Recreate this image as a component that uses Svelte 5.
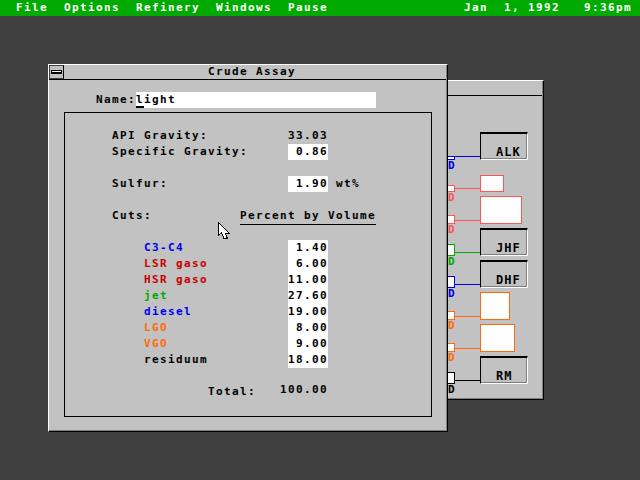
<script>
  const menus = ['File', 'Options', 'Refinery', 'Windows', 'Pause'];
  const cuts = [
    { name: 'C3-C4', value: '1.40', color: 'blue' },
    { name: 'LSR gaso', value: '6.00', color: 'red' },
    { name: 'HSR gaso', value: '11.00', color: 'red' },
    { name: 'jet', value: '27.60', color: 'green' },
    { name: 'diesel', value: '19.00', color: 'blue' },
    { name: 'LGO', value: '8.00', color: 'orange' },
    { name: 'VGO', value: '9.00', color: 'orange' },
    { name: 'residuum', value: '18.00', color: 'black' }
  ];
  const C = { blue: '#0000f0', pink: '#ff5555', green: '#00aa00', orange: '#ff6a10', black: '#000' };
  const units = [
    { kind: 'btn', label: 'ALK', top: 132, h: 28, w: 48, color: C.blue, sTop: 156, sH: 4, line: 156 },
    { kind: 'box', top: 175, h: 17, w: 24, color: C.pink, sTop: 185, sH: 7, line: 188 },
    { kind: 'box', top: 196, h: 28, w: 42, color: C.pink, sTop: 215, sH: 9, line: 220 },
    { kind: 'btn', label: 'JHF', top: 228, h: 28, w: 48, color: C.green, sTop: 244, sH: 12, line: 252 },
    { kind: 'btn', label: 'DHF', top: 260, h: 28, w: 48, color: C.blue, sTop: 276, sH: 12, line: 284 },
    { kind: 'box', top: 292, h: 28, w: 30, color: C.orange, sTop: 311, sH: 9, line: 316 },
    { kind: 'box', top: 324, h: 28, w: 35, color: C.orange, sTop: 343, sH: 9, line: 348 },
    { kind: 'btn', label: 'RM', top: 356, h: 28, w: 48, color: C.black, sTop: 372, sH: 12, line: 380 }
  ];
</script>

<div class="screen">
  <div class="menubar">
    <nav class="menus">
      {#each menus as m}<span>{m}</span>{/each}
    </nav>
    <span class="date">Jan  1, 1992</span>
    <span class="time">9:36pm</span>
  </div>

  <section class="window back">
    <div class="titlebar"></div>
    {#each units as u}
      <div class="stub" style="top:{u.sTop - 81}px;height:{u.sH}px;border-color:{u.color}"></div>
      <div class="wire" style="top:{u.line - 81}px;background:{u.color}"></div>
      <div class="dlabel" style="top:{u.sTop + u.sH - 80}px;color:{u.color}">D</div>
      {#if u.kind === 'btn'}
        <div class="unit-btn" style="top:{u.top - 81}px;height:{u.h}px;width:{u.w}px">{u.label}</div>
      {:else}
        <div class="unit-box" style="top:{u.top - 81}px;height:{u.h}px;width:{u.w}px;border-color:{u.color}"></div>
      {/if}
    {/each}
  </section>

  <section class="window front">
    <div class="titlebar">
      <div class="close"><i></i></div>
      <div class="title">Crude Assay</div>
    </div>
    <div class="name-row">
      <span class="name-label">Name:</span>
      <div class="name-field"><span class="caret">l</span>ight</div>
    </div>
    <div class="panel">
      <div class="row"><span class="label">API Gravity:</span><span class="value">33.03</span></div>
      <div class="row"><span class="label">Specific Gravity:</span><span class="value field">0.86</span></div>
      <div class="gap"></div>
      <div class="row"><span class="label">Sulfur:</span><span class="value field">1.90</span><span class="unit">wt%</span></div>
      <div class="gap"></div>
      <div class="row cuts-head"><span class="cuts-label">Cuts:</span><span class="heading">Percent by Volume</span></div>
      <div class="gap"></div>
      {#each cuts as c}
        <div class="row cut"><span class="cut-label {c.color}">{c.name}</span><span class="value field">{c.value}</span></div>
      {/each}
      <div class="gap"></div>
      <div class="row total"><span class="total-label">Total:</span><span class="total-value">100.00</span></div>
    </div>
  </section>

  <svg class="pointer" width="12" height="18" viewBox="0 0 12 18">
    <path d="M.5.5V13.5L3.5 11 6 16.5H9.5L7 11H11Z" fill="#fff" stroke="#000" stroke-width="1" shape-rendering="crispEdges"/>
  </svg>
</div>

<style>
  :global(body) { margin: 0; background: #404040; }
  .screen {
    position: relative; width: 640px; height: 480px; overflow: hidden;
    background: #404040; color: #000;
    font: bold 11px/16px "DejaVu Sans Mono", monospace;
    letter-spacing: 1.38px; white-space: nowrap;
  }
  .menubar {
    display: flex; height: 16px; background: #00aa00; color: #fff; padding-left: 16px;
  }
  .menus { display: flex; gap: 16px; width: 448px; }
  .date { white-space: pre; }
  .time { margin-left: 24px; }
  .window {
    position: absolute; box-sizing: border-box; background: #c2c2c2;
    border-top: 1px solid #fff; border-left: 1px solid #fff;
    border-right: 1px solid #000; border-bottom: 1px solid #000;
    box-shadow: inset -1px -1px 0 #808080;
  }
  .front { left: 48px; top: 64px; width: 400px; height: 368px; }
  .back { left: 447px; top: 80px; width: 97px; height: 320px; border-left: 0; }
  .titlebar { display: flex; height: 14px; border-bottom: 1px solid #000; margin-right: 1px; }
  .close {
    box-sizing: border-box; width: 15px; height: 14px; border: 1px solid #404040; border-right-color: #000;
    display: flex; align-items: center; justify-content: center;
  }
  .close i { display: block; width: 9px; height: 1px; background: #fff; border: 1px solid #000; border-bottom-width: 2px; }
  .title { margin-left: 144px; line-height: 14px; }
  .name-row { display: flex; margin: 12px 0 4px 47px; height: 16px; }
  .name-label { width: 40px; }
  .name-field { width: 240px; background: #fff; }
  .caret { border-bottom: 2px solid #000; display: inline-block; height: 14px; line-height: 16px; vertical-align: top; width: 8px; }
  .panel {
    box-sizing: border-box; width: 368px; height: 305px; margin-left: 15px;
    border: 1px solid #000; padding-top: 15px;
  }
  .row { display: flex; height: 16px; padding-left: 47px; }
  .gap { height: 16px; }
  .label { width: 176px; }
  .value { width: 40px; text-align: right; }
  .field { background: #fff; }
  .unit { margin-left: 8px; }
  .cuts-label { width: 128px; }
  .heading { width: 136px; box-shadow: 0 1px 0 #000; }
  .cut { padding-left: 79px; }
  .cut-label { width: 144px; }
  .blue { color: #0000f0; }
  .red { color: #c80000; }
  .green { color: #00aa00; }
  .orange { color: #ff6a10; }
  .black { color: #000; }
  .total { padding-left: 143px; }
  .total-label { width: 72px; }
  .total-value { width: 48px; text-align: right; line-height: 12px; }
  .stub { position: absolute; left: 1px; width: 7px; box-sizing: border-box; background: #fff; border: 1px solid; border-left: 0; }
  .wire { position: absolute; left: 8px; width: 25px; height: 1px; }
  .dlabel { position: absolute; left: 1px; line-height: 10px; }
  .unit-btn {
    position: absolute; left: 33px; box-sizing: border-box;
    border-top: 2px solid #000; border-left: 1px solid #000;
    border-right: 1px solid #fff; border-bottom: 1px solid #fff;
    box-shadow: inset -1px -1px 0 #808080;
    padding: 11px 0 0 15px; line-height: 14px;
    font-size: 12px; letter-spacing: 1px;
  }
  .unit-box { position: absolute; left: 33px; box-sizing: border-box; background: #fff; border: 1px solid; }
  .pointer { position: absolute; left: 218px; top: 222px; }
</style>
